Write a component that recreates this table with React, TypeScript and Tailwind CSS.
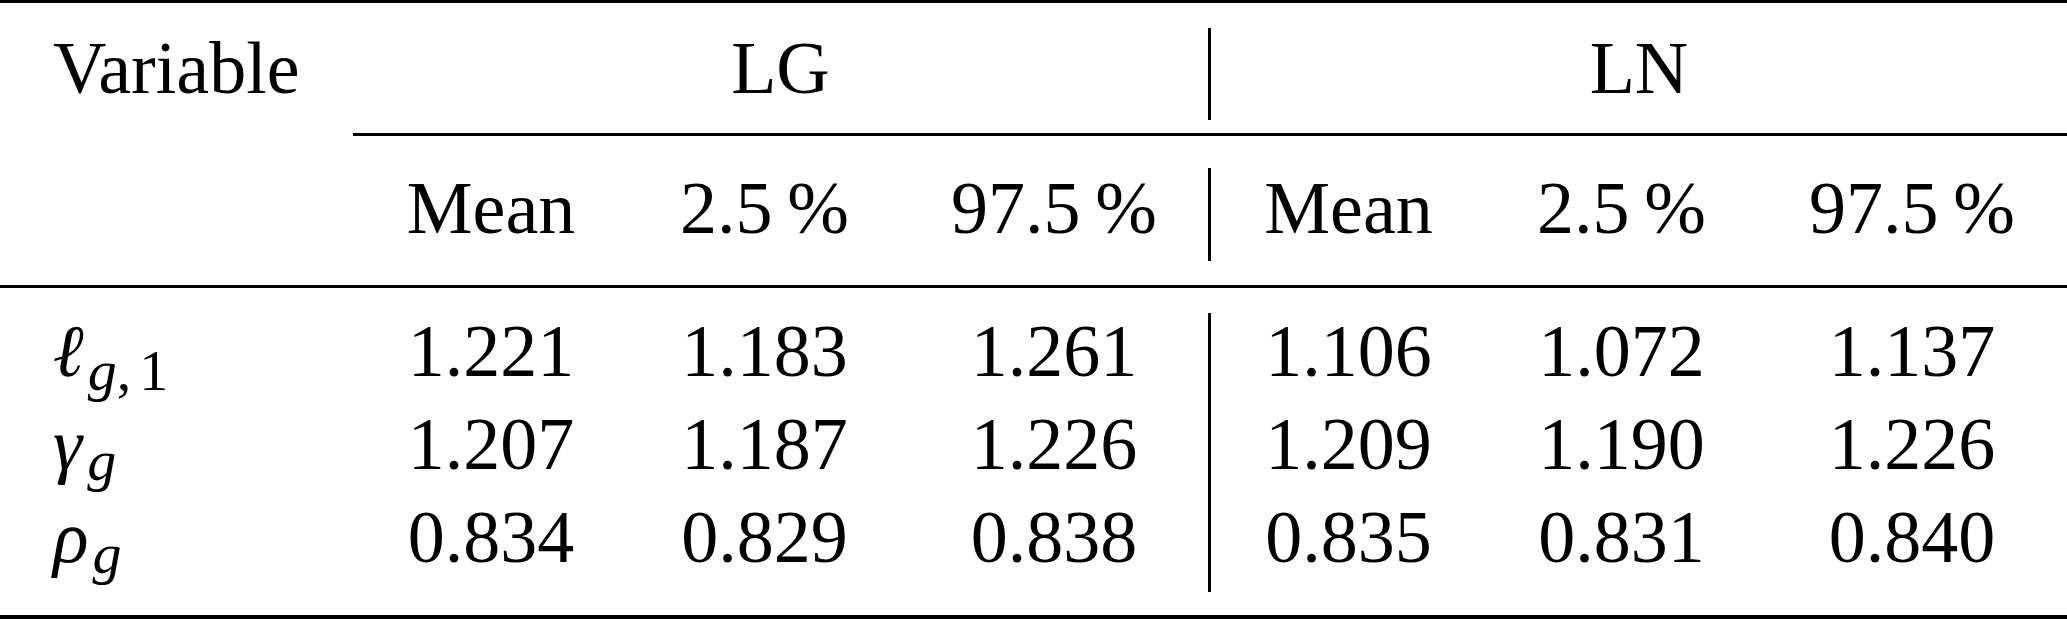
import React from "react";

const lw = ["w-[276px]", "w-[271px]", "w-[308px]"];
const rw = ["w-[275px]", "w-[271px]", "w-[310px]"];

function Cells({ vals, widths }: { vals: string[]; widths: string[] }) {
  return (
    <>
      {vals.map((v, i) => (
        <div key={i} className={`${widths[i]} text-center whitespace-pre`}>
          {v}
        </div>
      ))}
    </>
  );
}

function Sub({ children, drop }: { children: React.ReactNode; drop: string }) {
  return <span className={`relative text-[58px] ${drop}`}>{children}</span>;
}

type Row = { label: React.ReactNode; l: string[]; r: string[] };

const rows: Row[] = [
  {
    label: (
      <>
        <span className="italic">ℓ</span>
        <Sub drop="top-[14px]">
          <span className="italic ml-[4px]">g</span>
          <span>,</span>
          <span className="ml-[8px]">1</span>
        </Sub>
      </>
    ),
    l: ["1.221", "1.183", "1.261"],
    r: ["1.106", "1.072", "1.137"],
  },
  {
    label: (
      <>
        <span className="italic">γ</span>
        <Sub drop="top-[11px]">
          <span className="italic ml-[5px]">g</span>
        </Sub>
      </>
    ),
    l: ["1.207", "1.187", "1.226"],
    r: ["1.209", "1.190", "1.226"],
  },
  {
    label: (
      <>
        <span className="italic">ρ</span>
        <Sub drop="top-[11px]">
          <span className="italic ml-[4px]">g</span>
        </Sub>
      </>
    ),
    l: ["0.834", "0.829", "0.838"],
    r: ["0.835", "0.831", "0.840"],
  },
];

export default function App() {
  return (
    <div className="w-[2067px] h-[619px] bg-white text-black font-['Liberation_Serif'] text-[74px] flex flex-col overflow-hidden">
      {/* top rule */}
      <div className="h-[3px] w-full bg-black" />
      <div className="h-[25px]" />
      {/* header row 1 */}
      <div className="flex h-[92px] leading-[80px]">
        <div className="w-[353px] pl-[53px]">Variable</div>
        <div className="w-[855px] text-center">LG</div>
        <div className="w-[3px] bg-black" />
        <div className="w-[856px] text-center">LN</div>
      </div>
      <div className="h-[13px]" />
      {/* cmidrule */}
      <div className="flex h-[3px]">
        <div className="w-[353px]" />
        <div className="flex-1 bg-black" />
      </div>
      <div className="h-[32px]" />
      {/* header row 2 */}
      <div className="flex h-[93px] leading-[80px]">
        <div className="w-[353px]" />
        <Cells vals={["Mean", "2.5\u2009%", "97.5\u2009%"]} widths={lw} />
        <div className="w-[3px] bg-black" />
        <Cells vals={["Mean", "2.5\u2009%", "97.5\u2009%"]} widths={rw} />
      </div>
      <div className="h-[24px]" />
      {/* midrule */}
      <div className="h-[3px] w-full bg-black" />
      <div className="h-[25px]" />
      {/* body */}
      <div className="flex flex-col">
        {rows.map((row, i) => (
          <div key={i} className="flex h-[93px] leading-[76px]">
            <div className="w-[353px] pl-[53px] whitespace-nowrap">{row.label}</div>
            <Cells vals={row.l} widths={lw} />
            <div className="w-[3px] bg-black" />
            <Cells vals={row.r} widths={rw} />
          </div>
        ))}
      </div>
      <div className="h-[23px]" />
      {/* bottom rule */}
      <div className="h-[4px] w-full bg-black" />
    </div>
  );
}
